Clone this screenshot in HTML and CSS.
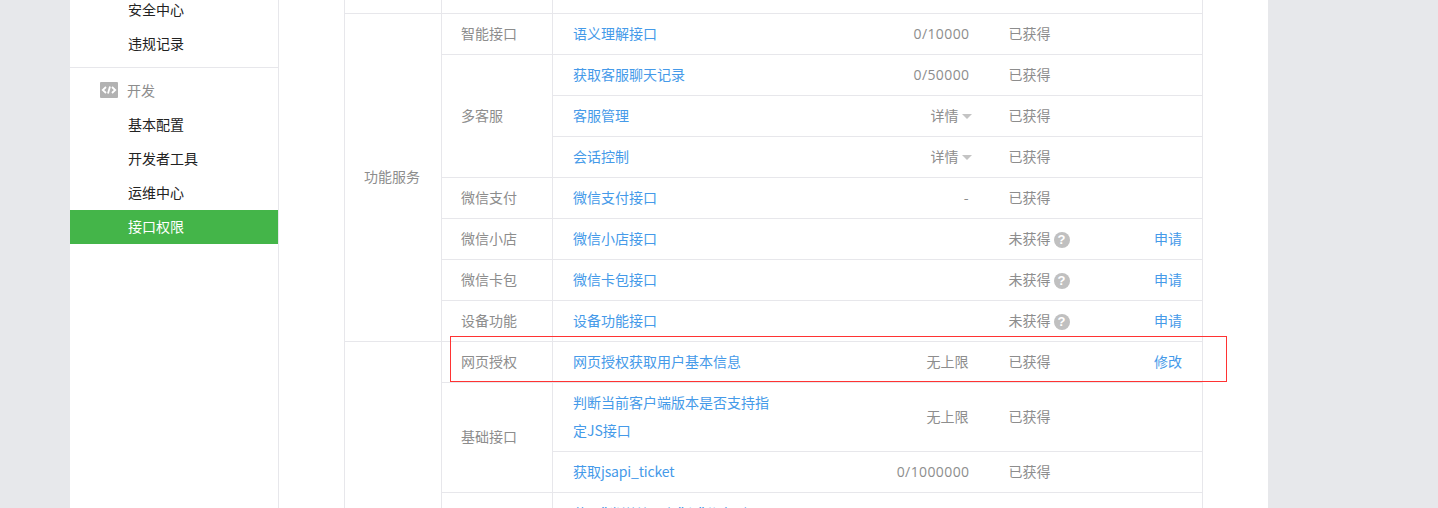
FILE: index.html
```html
<!DOCTYPE html>
<html lang="zh-CN">
<head>
<meta charset="utf-8">
<title>接口权限</title>
<link rel="stylesheet" href="styles.css">
</head>
<body>
<div class="page">
  <aside class="sidebar">
    <ul class="menu menu-first">
      <li class="menu-item">安全中心</li>
      <li class="menu-item">违规记录</li>
    </ul>
    <ul class="menu menu-dev">
      <li class="menu-title">
        <svg class="dev-icon" width="18" height="16" viewBox="0 0 18 16" aria-hidden="true">
          <rect width="18" height="16" rx="1" fill="#b2b2b2"/>
          <path d="M6 5 2.800 8 6 11M12 5l3.200 3L12 11M10 4.500 8 11.500" fill="none" stroke="#fff" stroke-width="1.800"/>
        </svg>
        <span>开发</span>
      </li>
      <li class="menu-item">基本配置</li>
      <li class="menu-item">开发者工具</li>
      <li class="menu-item">运维中心</li>
      <li class="menu-item active">接口权限</li>
    </ul>
  </aside>
  <main class="content">
    <table class="perm">
      <colgroup>
        <col class="c1"><col class="c2"><col class="c3"><col class="c4"><col class="c5"><col class="c6">
      </colgroup>
      <tbody>
        <tr class="stub"><td></td><td></td><td class="act" colspan="4"></td></tr>
        <tr>
          <td class="head" rowspan="8">功能服务</td>
          <td class="head">智能接口</td>
          <td class="api"><a>语义理解接口</a></td><td class="quota"><span class="num">0/10000</span></td><td class="st">已获得</td><td class="act"></td>
        </tr>
        <tr>
          <td class="head" rowspan="3">多客服</td>
          <td class="api"><a>获取客服聊天记录</a></td><td class="quota"><span class="num">0/50000</span></td><td class="st">已获得</td><td class="act"></td>
        </tr>
        <tr><td class="api"><a>客服管理</a></td><td class="quota">详情<i class="caret"></i></td><td class="st">已获得</td><td class="act"></td></tr>
        <tr><td class="api"><a>会话控制</a></td><td class="quota">详情<i class="caret"></i></td><td class="st">已获得</td><td class="act"></td></tr>
        <tr><td class="head">微信支付</td><td class="api"><a>微信支付接口</a></td><td class="quota">-</td><td class="st">已获得</td><td class="act"></td></tr>
        <tr><td class="head">微信小店</td><td class="api"><a>微信小店接口</a></td><td class="quota"></td><td class="st">未获得<b class="help">?</b></td><td class="act"><a>申请</a></td></tr>
        <tr><td class="head">微信卡包</td><td class="api"><a>微信卡包接口</a></td><td class="quota"></td><td class="st">未获得<b class="help">?</b></td><td class="act"><a>申请</a></td></tr>
        <tr><td class="head">设备功能</td><td class="api"><a>设备功能接口</a></td><td class="quota"></td><td class="st">未获得<b class="help">?</b></td><td class="act"><a>申请</a></td></tr>
        <tr>
          <td class="head" rowspan="4"></td>
          <td class="head">网页授权</td>
          <td class="api"><a>网页授权获取用户基本信息</a></td><td class="quota">无上限</td><td class="st">已获得</td><td class="act"><a>修改</a></td>
        </tr>
        <tr>
          <td class="head" rowspan="2">基础接口</td>
          <td class="api"><a>判断当前客户端版本是否支持指定JS接口</a></td><td class="quota">无上限</td><td class="st">已获得</td><td class="act"></td>
        </tr>
        <tr><td class="api"><a>获取<span class="latin">jsapi_ticket</span></a></td><td class="quota"><span class="num">0/1000000</span></td><td class="st">已获得</td><td class="act"></td></tr>
        <tr class="tail">
          <td class="head"></td>
          <td class="api"><a>获取"发送给朋友"和"分享到朋友圈"按钮点击状态及自定义分享内容接口</a></td><td class="quota"></td><td class="st"></td><td class="act"></td>
        </tr>
      </tbody>
    </table>
    <div class="highlight"></div>
  </main>
</div>
</body>
</html>
```
FILE: styles.css
```css
* { box-sizing: border-box; }
html, body {
  margin: 0;
  height: 508px;
  overflow: hidden;
}
body {
  background: #e7e8eb;
  font-family: "Noto Sans CJK SC", "Liberation Sans", sans-serif;
  font-size: 14px;
  color: #8d8d8d;
}
.page {
  display: flex;
  width: 1198px;
  height: 508px;
  margin-left: 70px;
  background: #fff;
  overflow: hidden;
}
.sidebar {
  width: 209px;
  flex: none;
  border-right: 1px solid #e7e7eb;
}
.menu {
  list-style: none;
  margin: 0;
  padding: 0;
}
.menu-first {
  margin-top: -7px;
  padding-bottom: 6px;
  border-bottom: 1px solid #e7e7eb;
}
.menu-item {
  height: 34px;
  line-height: 32px;
  padding-left: 58px;
  color: #222;
}
.menu-item.active {
  background: #44b549;
  color: #fff;
}
.menu-title {
  display: flex;
  align-items: center;
  height: 40px;
  padding: 4px 0 0 30px;
  color: #8d8d8d;
}
.dev-icon {
  margin-right: 9px;
}
.content {
  position: relative;
  flex: 1;
  padding-left: 65px;
}
.perm {
  width: 858px;
  table-layout: fixed;
  border-collapse: collapse;
}
.c1 { width: 97px; }
.c2 { width: 111px; }
.c3 { width: 237px; }
.c4 { width: 199px; }
.c5 { width: 131px; }
.c6 { width: 83px; }
.perm tr { height: 41px; }
.perm tr.stub { height: 13px; }
.perm td {
  border: 1px solid #e7e7eb;
  padding: 5px 20px 7px;
  line-height: 28px;
  vertical-align: middle;
}
.perm td.head { padding-left: 19px; }
.perm td.api,
.perm td.quota,
.perm td.st { border-right: 0; }
.perm td.quota,
.perm td.st,
.perm td.act { border-left: 0; }
.perm td.act { text-align: right; }
.perm td.quota { text-align: right; white-space: nowrap; }
.perm tr.stub td {
  padding: 0;
  line-height: 0;
  border-top: 0;
}
.perm tr.tail td { padding-top: 6px; }
.perm a { color: #459ae9; }
.latin { letter-spacing: -.15px; }
.num {
  margin-right: -1px;
  font-family: "Open Sans", sans-serif;
  line-height: 1;
  letter-spacing: .4px;
}
.caret {
  display: inline-block;
  width: 0;
  height: 0;
  margin: 0 -3px 2px 3px;
  border-style: solid;
  border-width: 5px 5.500px 0;
  border-color: #c4c4c4 transparent transparent;
}
.help {
  display: inline-block;
  width: 16px;
  height: 16px;
  margin-left: 3px;
  border-radius: 50%;
  background: #c0c0c0;
  color: #fff;
  font: bold 13px/16px "Liberation Sans", sans-serif;
  text-align: center;
  vertical-align: 0;
}
.highlight {
  position: absolute;
  left: 171px;
  top: 336px;
  width: 777px;
  height: 46px;
  border: 1px solid #f33;
  pointer-events: none;
}
```
